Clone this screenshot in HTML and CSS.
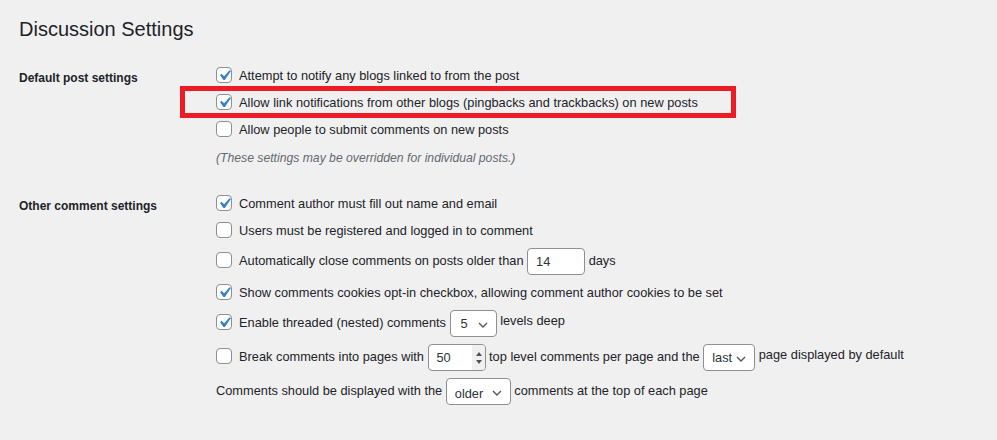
FILE: index.html
```html
<!DOCTYPE html>
<html lang="en">
<head>
<meta charset="utf-8">
<title>Discussion Settings</title>
<link rel="stylesheet" href="styles.css">
</head>
<body>
<div class="wrap">
  <h1>Discussion Settings</h1>

  <div class="form-row first">
    <div class="th">Default post settings</div>
    <div class="td">
      <div class="opt"><span class="cb on"><svg viewBox="0 0 20 20"><path d="M14.83 4.89l1.34.94-5.81 8.38H9.02L5.78 9.67l1.34-1.25 2.57 2.4z"/></svg></span>Attempt to notify any blogs linked to from the post</div>
      <div class="opt highlight"><span class="cb on"><svg viewBox="0 0 20 20"><path d="M14.83 4.89l1.34.94-5.81 8.38H9.02L5.78 9.67l1.34-1.25 2.57 2.4z"/></svg></span>Allow link notifications from other blogs (pingbacks and trackbacks) on new posts</div>
      <div class="opt"><span class="cb"></span>Allow people to submit comments on new posts</div>
      <p class="desc">(These settings may be overridden for individual posts.)</p>
    </div>
  </div>

  <div class="form-row second">
    <div class="th">Other comment settings</div>
    <div class="td">
      <div class="opt"><span class="cb on"><svg viewBox="0 0 20 20"><path d="M14.83 4.89l1.34.94-5.81 8.38H9.02L5.78 9.67l1.34-1.25 2.57 2.4z"/></svg></span>Comment author must fill out name and email</div>
      <div class="opt"><span class="cb"></span>Users must be registered and logged in to comment</div>
      <div class="opt ctl"><span class="cb"></span>Automatically close comments on posts older than <span class="field text w58">14</span> days</div>
      <div class="opt ctl-after"><span class="cb on"><svg viewBox="0 0 20 20"><path d="M14.83 4.89l1.34.94-5.81 8.38H9.02L5.78 9.67l1.34-1.25 2.57 2.4z"/></svg></span>Show comments cookies opt-in checkbox, allowing comment author cookies to be set</div>
      <div class="opt ctl"><span class="cb on"><svg viewBox="0 0 20 20"><path d="M14.83 4.89l1.34.94-5.81 8.38H9.02L5.78 9.67l1.34-1.25 2.57 2.4z"/></svg></span>Enable threaded (nested) comments <span class="field select w47">5<svg class="chev" viewBox="0 0 10 6"><polyline points="1,1 5,5 9,1"/></svg></span> <span class="raise">levels deep</span></div>
      <div class="opt ctl"><span class="cb"></span>Break comments into pages with <span class="field number w58">50<span class="spin"><svg viewBox="0 0 8 20"><path d="M4 4 L7 8 L1 8 Z"/><path d="M1 12 L7 12 L4 16 Z"/></svg></span></span> top level comments per page and the <span class="field select w52">last<svg class="chev" viewBox="0 0 10 6"><polyline points="1,1 5,5 9,1"/></svg></span> <span class="raise">page displayed by default</span></div>
      <div class="opt ctl">Comments should be displayed with the <span class="field select w65 low">older<svg class="chev" viewBox="0 0 10 6"><polyline points="1,1 5,5 9,1"/></svg></span> comments at the top of each page</div>
    </div>
  </div>
</div>
</body>
</html>
```

FILE: styles.css
```css
html, body {
  margin: 0;
  padding: 0;
  background: #f0f0f1;
}

body {
  font-family: "Liberation Sans", Arial, sans-serif;
  font-size: 12.8px;
  color: #1d2327;
}

.wrap {
  padding: 15px 0 0 19px;
}

h1 {
  margin: 0;
  font-size: 20px;
  line-height: 28px;
  font-weight: 400;
  color: #1d2327;
}

.form-row {
  display: grid;
  grid-template-columns: 197px 1fr;
}

.form-row.first {
  margin-top: 23px;
}

.form-row.second {
  margin-top: 26px;
}

.th {
  font-weight: 700;
  font-size: 12px;
  line-height: 20px;
  padding-top: 2px;
}

.td {
  line-height: 20px;
}

.opt {
  line-height: 20px;
  white-space: nowrap;
}

.opt + .opt {
  margin-top: 7px;
}

.opt.ctl {
  margin-top: 7px;
}

.opt.ctl-after {
  margin-top: 8px;
}

.desc {
  margin: 8px 0 0;
  font-style: italic;
  font-size: 12.2px;
  color: #646970;
  line-height: 20px;
}

.cb {
  display: inline-block;
  box-sizing: border-box;
  width: 16px;
  height: 16px;
  border: 1px solid #8c8f94;
  border-radius: 4px;
  background: #fff;
  vertical-align: -3px;
  margin-right: 7px;
  position: relative;
}

.cb svg {
  position: absolute;
  left: -3px;
  top: -3px;
  width: 21px;
  height: 21px;
  fill: #3582c4;
}

.highlight {
  position: relative;
}

.highlight::after {
  content: "";
  position: absolute;
  left: -36px;
  top: -7px;
  width: 556px;
  height: 32px;
  box-sizing: border-box;
  border: 5px solid #ed1c24;
}

.field {
  display: inline-block;
  box-sizing: border-box;
  height: 27px;
  line-height: 25px;
  border: 1px solid #8c8f94;
  border-radius: 4px;
  background: #fff;
  vertical-align: middle;
  padding-left: 8px;
  position: relative;
  color: #2c3338;
}

.w58 { width: 58px; }
.w47 { width: 47px; padding-left: 10px; }
.w52 { width: 52px; }
.w65 { width: 65px; }

.field.low {
  line-height: 29px;
}

.chev {
  position: absolute;
  right: 8px;
  top: 11px;
  width: 10px;
  height: 6px;
  fill: none;
  stroke: #50575e;
  stroke-width: 1.4;
}

.spin {
  position: absolute;
  right: 0;
  top: 0;
  bottom: 0;
  width: 13px;
  background: #f0f0f0;
  border-radius: 0 3px 3px 0;
}

.spin svg {
  position: absolute;
  left: 3px;
  top: 3px;
  width: 8px;
  height: 20px;
  fill: #505050;
}

.raise {
  position: relative;
  top: -2px;
}
```
